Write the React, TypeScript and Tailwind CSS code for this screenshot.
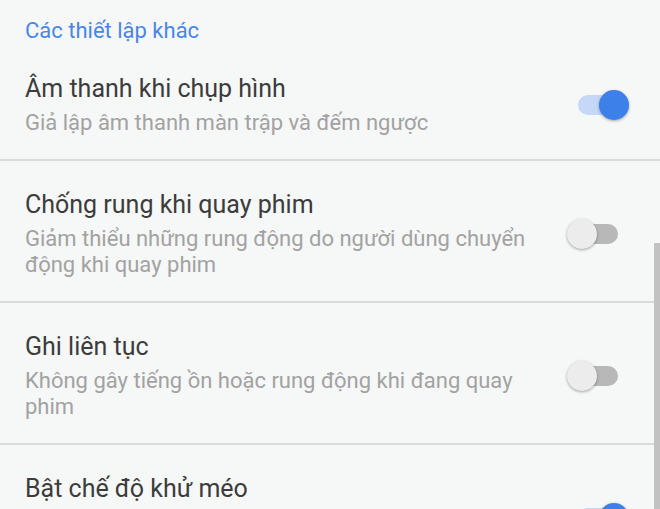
import React from "react";

type Item = { title: string; sub: string; on: boolean };

const items: Item[] = [
  { title: "Âm thanh khi chụp hình", sub: "Giả lập âm thanh màn trập và đếm ngược", on: true },
  { title: "Chống rung khi quay phim", sub: "Giảm thiểu những rung động do người dùng chuyển động khi quay phim", on: false },
  { title: "Ghi liên tục", sub: "Không gây tiếng ồn hoặc rung động khi đang quay phim", on: false },
  { title: "Bật chế độ khử méo", sub: "Tự động sửa các đường cong bị méo ở cạnh ảnh khi chụp góc rộng", on: true },
];

function Toggle({ on }: { on: boolean }) {
  return (
    <div className="relative flex items-center w-[62px] h-[32px] shrink-0">
      <div
        className={
          "ml-[11px] w-[40px] h-[20px] rounded-full " +
          (on ? "bg-[#c5d8f8]" : "bg-[#b8b8b8]")
        }
      />
      <div
        className={
          "absolute top-[1px] w-[30px] h-[30px] rounded-full shadow-[0_1px_3px_rgba(0,0,0,0.35)] " +
          (on ? "right-0 bg-[#3d80ea]" : "left-0 bg-[#ececec]")
        }
      />
    </div>
  );
}

export default function App() {
  return (
    <div
      className="relative w-[660px] h-[509px] overflow-hidden bg-[#f6f7f7]"
      style={{ fontFamily: "Roboto, 'Noto Sans', sans-serif" }}
    >
      <div className="pl-[25px] pt-[17px] h-[45px] text-[22px] leading-[28px] text-[#4a86e8]">
        Các thiết lập khác
      </div>
      {items.map((it, i) => (
        <div key={i}>
          <div className="flex items-center gap-[16px] pl-[25px] pr-[31px] pt-[28px] pb-[23px]">
            <div className="flex-1">
              <div className="text-[25px] leading-[32px] text-[#3c3c3c]">{it.title}</div>
              <div className="mt-[5px] text-[22px] leading-[26px] text-[#a2a2a2]">{it.sub}</div>
            </div>
            <Toggle on={it.on} />
          </div>
          <div className="h-[2px] bg-[#dadada]" />
        </div>
      ))}
      <div className="absolute right-0 top-[243px] w-[6px] h-[300px] bg-[#c2c2c2]" />
    </div>
  );
}
